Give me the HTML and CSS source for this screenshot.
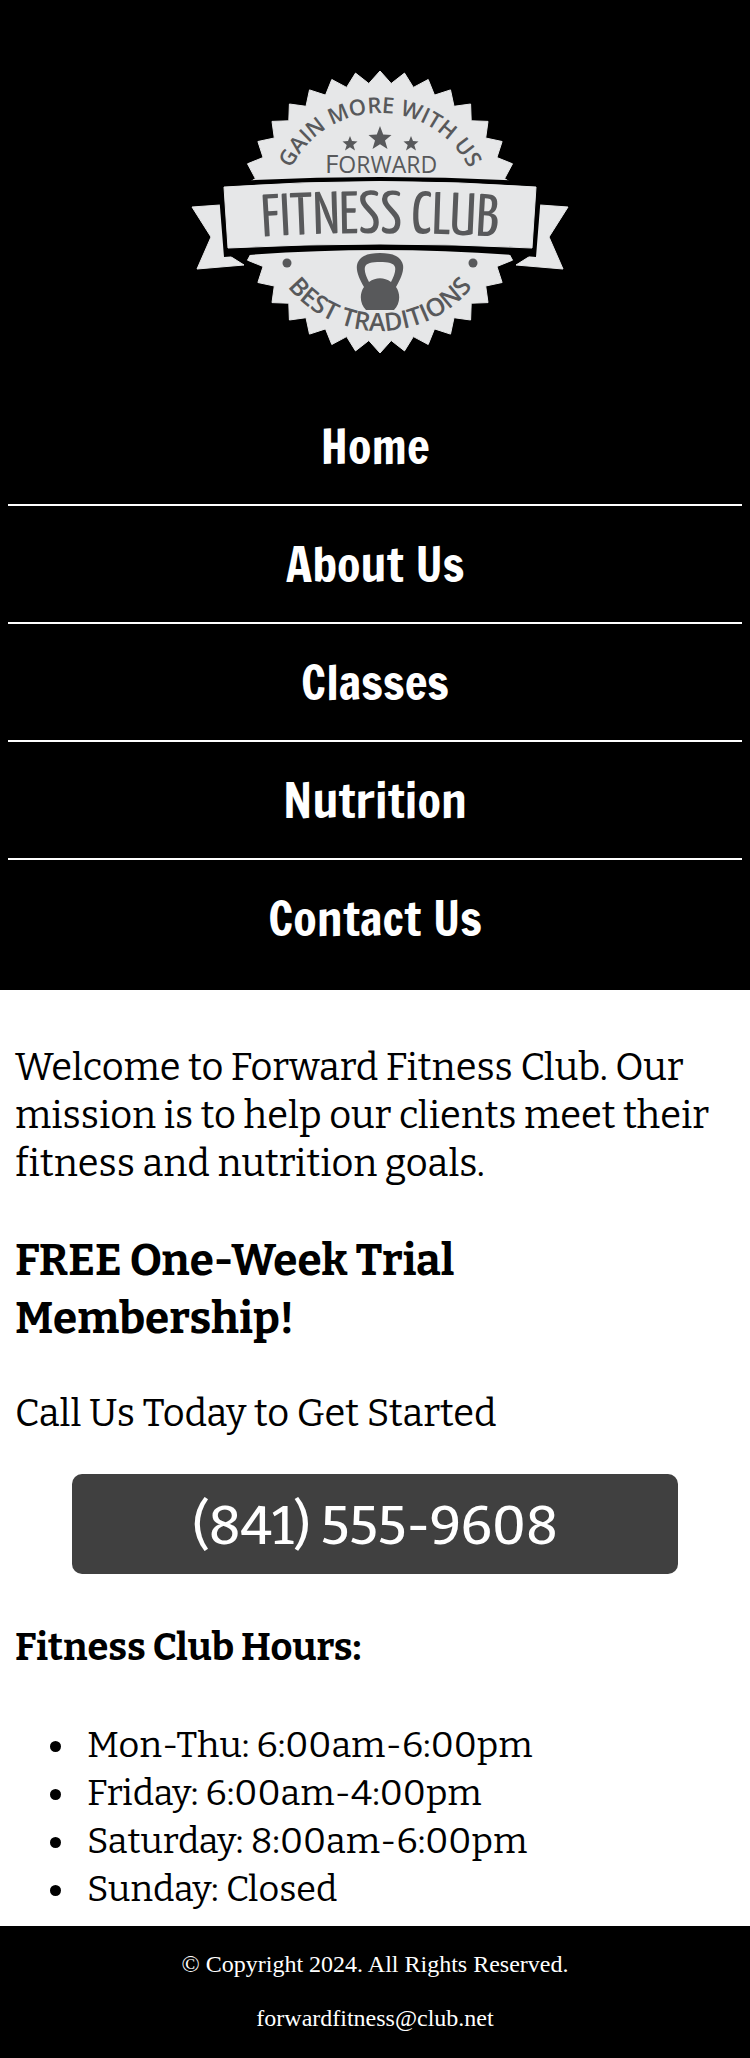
FILE: index.html
```html
<!DOCTYPE html>
<html lang="en">
<head>
<meta charset="utf-8">
<meta name="viewport" content="width=device-width, initial-scale=1">
<title>Forward Fitness Club</title>
<link rel="stylesheet" href="styles.css">
</head>
<body>
<header class="header">
  <svg class="logo" viewBox="180 60 390 300" role="img" aria-label="Forward Fitness Club logo">
    <defs>
      <path id="arc-top" d="M281 212A99 99 0 0 1 479 212"/>
      <path id="arc-bottom" d="M261 212A119 119 0 0 0 499 212"/>
      <path id="arc-name" d="M230 239Q380 227 530 239"/>
    </defs>
    <g class="badge">
      <path id="seal" d=""/>
      <path d="M192 207L220 205L225 253L244 265L197 269L211 237Z"/>
      <path d="M568 207L540 205L535 253L516 265L563 269L549 237Z"/>
    </g>
    <path class="gap" d="M218 182Q380 172 542 182L536 257Q380 243 224 257Z"/>
    <path class="badge" d="M224 187Q380 176 536 187L532 248Q380 240 228 248Z"/>
    <g class="ink">
      <path d="M380 126L383.200 134.500L391.500 135L385 140.500L387.500 149L380 144.200L372.500 149L375 140.500L368.500 135L376.800 134.500Z"/>
      <path id="star" d="M350 136L352 141L357.500 141.500L353.300 145L355 150.500L350 147.300L345 150.500L346.700 145L342.500 141.500L348 141Z"/>
      <use href="#star" x="61"/>
      <circle cx="287" cy="263" r="4.500"/>
      <circle cx="473" cy="263" r="4.500"/>
      <path fill-rule="evenodd" d="M364 287C359 278 356 271 357 265C359 256 368 253 380 253C392 253 401 256 403 265C404 271 401 278 396 287C401 294 400 304 394 310H366C360 304 359 294 364 287ZM369 282C376 277 384 277 391 282C394 276 396 271 395 267C394 263 388 262 380 262C372 262 366 263 365 267C364 271 366 276 369 282Z"/>
      <text class="motto" text-anchor="middle"><textPath href="#arc-top" startOffset="50%">GAIN MORE WITH US</textPath></text>
      <text class="motto motto-lower" text-anchor="middle"><textPath href="#arc-bottom" startOffset="50%">BEST TRADITIONS</textPath></text>
      <text class="forward" x="381" y="173" text-anchor="middle"><tspan class="forward-initial">F</tspan>ORWARD</text>
      <text class="name" text-anchor="middle"><textPath href="#arc-name" startOffset="50%">FITNESS CLUB</textPath></text>
    </g>
  </svg>
  <nav>
    <ul class="nav">
      <li><a href="#home">Home</a></li>
      <li><a href="#about">About Us</a></li>
      <li><a href="#classes">Classes</a></li>
      <li><a href="#nutrition">Nutrition</a></li>
      <li><a href="#contact">Contact Us</a></li>
    </ul>
  </nav>
</header>
<main class="main">
  <p class="welcome">Welcome to Forward Fitness Club. Our mission is to help our clients meet their fitness and nutrition goals.</p>
  <h2 class="offer">FREE One-Week Trial Membership!</h2>
  <p class="call">Call Us Today to Get Started</p>
  <a class="phone" href="tel:8415559608">(841) 555-9608</a>
  <h3 class="hours-title">Fitness Club Hours:</h3>
  <ul class="hours">
    <li>Mon-Thu: 6:00am-6:00pm</li>
    <li>Friday: 6:00am-4:00pm</li>
    <li>Saturday: 8:00am-6:00pm</li>
    <li>Sunday: Closed</li>
  </ul>
</main>
<footer class="footer">
  <p>© Copyright 2024. All Rights Reserved.</p>
  <p><a href="mailto:forwardfitness@club.net">forwardfitness@club.net</a></p>
</footer>
<script src="seal.js"></script>
</body>
</html>
```
FILE: seal.js
```javascript
// Serrated edge of the badge: 36 teeth around the centre.
(function () {
  var points = [];
  for (var i = 0; i < 72; i++) {
    var angle = i * Math.PI / 36;
    var radius = i % 2 ? 129 : 141;
    points.push((380 + radius * Math.sin(angle)).toFixed(1) + " " + (212 - radius * Math.cos(angle)).toFixed(1));
  }
  document.getElementById("seal").setAttribute("d", "M" + points.join("L") + "Z");
})();
```
FILE: styles.css
```css
* { box-sizing: border-box; }

body {
  margin: 0;
  background: #fff;
  color: #000;
  font-family: "Roboto Slab", Bitter, "Roboto Serif", "DejaVu Serif", serif;
  font-size: 38px;
  line-height: 48px;
}

p, h2, h3, ul { margin: 0; padding: 0; }

.header {
  background: #000;
  padding: 60px 8px 14px;
}

.logo {
  display: block;
  width: 390px;
  max-width: 100%;
  margin: 0 auto 28px;
}

.badge {
  fill: #e6e7e8;
  stroke: #e6e7e8;
  stroke-width: 1;
  stroke-linejoin: round;
}

.gap { fill: #000; }
.ink { fill: #58595b; }

.motto { font: 600 22px "Open Sans", sans-serif; }
.motto-lower { font-size: 25px; }
.forward { font: 400 23px "Open Sans", sans-serif; }
.forward-initial { font-size: 26px; }
.name { font: 400 60px "Yanone Kaffeesatz", "Roboto Condensed", sans-serif; }

.nav { list-style: none; }
.nav li + li { border-top: 2px solid #fff; }

.nav a {
  display: block;
  padding: 24px 0;
  color: #fff;
  font-family: "Francois One", "Roboto Condensed", sans-serif;
  font-size: 48px;
  line-height: 68px;
  text-align: center;
  text-decoration: none;
}

.main { padding: 53px 15px 13px; }

.offer {
  margin: 45px 0 41px;
  font-size: 44px;
  font-weight: 700;
  line-height: 58px;
}

.phone {
  display: block;
  width: 606px;
  max-width: 100%;
  margin: 37px auto 49px;
  padding: 18px 16px 14px;
  border-radius: 10px;
  background: #404040;
  color: #fff;
  font-size: 53px;
  font-weight: 500;
  line-height: 68px;
  text-align: center;
  text-decoration: none;
}

.hours-title {
  margin-bottom: 50px;
  font-size: 38px;
  font-weight: 700;
}

.hours {
  padding-left: 64px;
  font-size: 36px;
}

.hours li { padding-left: 8px; }

.footer {
  display: flex;
  flex-direction: column;
  gap: 26px;
  padding: 24px 16px 26px;
  background: #000;
  color: #fff;
  font-family: "Times New Roman", "Liberation Serif", serif;
  font-size: 24px;
  line-height: 28px;
  text-align: center;
}

.footer a { color: inherit; text-decoration: none; }
```
